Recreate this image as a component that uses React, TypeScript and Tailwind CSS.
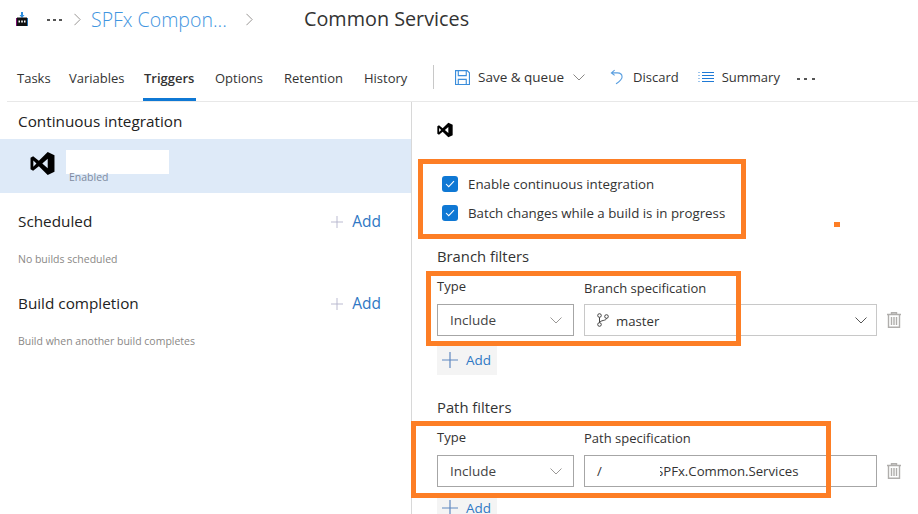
import React from "react";

const VS = ({ className }: { className: string }) => (
  <svg viewBox="0 0 24 24" className={className}>
    <path fillRule="evenodd" d="M17 1 L23.5 4 V20 L17 23 L8.5 14.6 L3 19 L.5 17.5 V6.5 L3 5 L8.5 9.4 Z M17 7.5 L11.8 12 L17 16.5 Z M3.2 9 V15 L6.2 12 Z" fill="#000" />
  </svg>
);
const Chevron = ({ className, color = "#8a8886" }: { className: string; color?: string }) => (
  <svg viewBox="0 0 12 7" className={className} fill="none" stroke={color} strokeWidth="1">
    <path d="M.5 .5 L6 6 L11.5 .5" />
  </svg>
);
const Right = ({ className }: { className: string }) => (
  <svg viewBox="0 0 8 14" className={className} fill="none" stroke="#8a8886" strokeWidth="1">
    <path d="M.5 .5 L7 7 L.5 13.5" />
  </svg>
);
const Dots = ({ className }: { className: string }) => (
  <span className={`flex items-center ${className}`}>
    <span className="w-[3px] h-[2px] bg-[#555]" />
    <span className="w-[3px] h-[2px] bg-[#555]" />
    <span className="w-[3px] h-[2px] bg-[#555]" />
  </span>
);
const Plus = ({ className }: { className: string }) => (
  <svg viewBox="0 0 16 16" className={className} stroke="#b3b3cc" strokeWidth="1.2">
    <path d="M8 0 V16 M0 8 H16" />
  </svg>
);
const Trash = () => (
  <svg viewBox="0 0 14 16" className="w-[14px] h-[16px] shrink-0" fill="none" stroke="#b0aeac" strokeWidth="1.4">
    <path d="M0 2.5 H14 M4.5 2.5 V.7 H9.5 V2.5 M1.5 2.5 V15.3 H12.5 V2.5 M4.5 5 V13 M7 5 V13 M9.5 5 V13" />
  </svg>
);
const Check = () => (
  <span className="w-4 h-4 rounded-[3px] bg-[#0f78d4] flex items-center justify-center shrink-0">
    <svg viewBox="0 0 12 10" className="w-[10px] h-[8px]" fill="none" stroke="#fff" strokeWidth="1.3">
      <path d="M1 5 L4.4 8.4 L11 1.4" />
    </svg>
  </span>
);
const Section = ({ title, note }: { title: string; note: string }) => (
  <div>
    <div className="flex items-center h-[24px] pl-[18px] pr-[30px]">
      <span className="text-[15.3px] text-[#222] mb-[2px]">{title}</span>
      <span className="ml-auto flex items-center gap-[9px] text-[#2f78c4] text-[15.5px]">
        <Plus className="w-3 h-3" />
        Add
      </span>
    </div>
    <div className="pl-[18px] mt-[18px] text-[10.5px] leading-[14px] text-[#8a8886]">{note}</div>
  </div>
);
const Select = () => (
  <div className="w-[137px] h-[32px] border border-[#a6a6a6] flex items-center pl-[12px] pr-[11px] text-[13.5px] text-[#444] shrink-0">
    Include
    <Chevron className="w-3 h-[7px] ml-auto" color="#9a9896" />
  </div>
);
const AddBtn = () => (
  <div className="w-[60px] h-[30px] bg-[#f4f4f4] flex items-center pl-[5px] gap-[8px] text-[13.5px] text-[#2f78c4]">
    <svg viewBox="0 0 16 16" className="w-4 h-4" stroke="#5f88c0" strokeWidth="1.2">
      <path d="M8 0 V16 M0 8 H16" />
    </svg>
    Add
  </div>
);
const Box = ({ className }: { className: string }) => (
  <div className={`absolute border-[5px] border-[#fd7e25] ${className}`} />
);

export default function App() {
  return (
    <div className="relative w-[918px] h-[514px] overflow-hidden bg-white font-['Open_Sans','Noto_Sans',sans-serif]">
      <header className="h-[41px] flex items-center pl-[16px] pt-[1px]">
        <svg viewBox="0 0 12 14" className="w-3 h-[14px] shrink-0 mb-[4px]">
          <path d="M5 0 H7 V3 H8.5 L6 6 L3.5 3 H5 Z" fill="#2f8fe0" />
          <path d="M1 5.5 H11 V14 H1 Z" fill="#111" />
          <path d="M0 6 H1 V14 H0 Z" fill="#7a0d6d" />
          <path d="M11 6 H12 V14 H11 Z" fill="#1f6fb5" />
          <path d="M2.5 8.5 H4 V10.5 H2.5 Z M5.2 8.5 H6.8 V10.5 H5.2 Z M8 8.5 H9.5 V10.5 H8 Z" fill="#fff" />
        </svg>
        <Dots className="gap-[3px] ml-[19px] mb-[3px]" />
        <Right className="w-[7px] h-[13px] ml-[12px] mb-[3px]" />
        <span className="ml-[10px] text-[19.5px] font-light leading-[28px] text-[#3f95e0] whitespace-nowrap w-[137px] mb-[3px]">SPFx Compon...</span>
        <Right className="w-[7px] h-[13px] ml-[18px] mb-[3px]" />
        <span className="ml-[51px] text-[19.8px] leading-[28px] text-[#333] whitespace-nowrap mb-[4px]">Common Services</span>
      </header>

      <nav className="ml-[7px] h-[61px] border-b border-[#e8e8e8] flex items-start text-[13px] text-[#333] relative">
        <div className="flex mt-[27px] leading-[20px]">
          <span className="ml-[10px] w-[52px]">Tasks</span>
          <span className="w-[75px]">Variables</span>
          <span className="w-[71px] font-semibold">Triggers</span>
          <span className="w-[69px]">Options</span>
          <span className="w-[80px]">Retention</span>
          <span className="w-[69px]">History</span>
        </div>
        <span className="absolute left-[136px] top-[57px] w-[53px] h-[3px] bg-[#0f78d4]" />
        <span className="w-px h-[24px] bg-[#c8c8c8] mt-[24px]" />
        <div className="flex items-center mt-[26px] leading-[20px]">
          <svg viewBox="0 0 16 16" className="w-[15px] h-[15px] ml-[21px]" fill="none" stroke="#3a8ddb" strokeWidth="1.2">
            <path d="M.6 .6 H13 L15.4 3 V15.4 H.6 Z M3.5 1 V6 H12 V1 M3.5 15 V10 H12 V15" />
          </svg>
          <span className="ml-[8px] text-[13.5px]">Save &amp; queue</span>
          <Chevron className="w-3 h-[7px] ml-[9px]" />
          <svg viewBox="0 0 14 16" className="w-[13px] h-[16px] ml-[25px]" fill="none" stroke="#5a9fe0" strokeWidth="1.2">
            <path d="M5 .6 L1.5 3.6 L5 6.2 M1.5 3.6 H8 C11 3.6 13 5.5 13 8 C13 11 10 13 6.5 15.4" />
          </svg>
          <span className="ml-[10px]">Discard</span>
          <svg viewBox="0 0 16 12" className="w-[16px] h-[12px] ml-[19px]" stroke="#1f7ad6" strokeWidth="1">
            <path d="M4 1.5 H16 M4 4.5 H16 M4 7.5 H16 M4 10.5 H16" />
            <path d="M0 1.5 H2 M0 4.5 H2 M0 7.5 H2 M0 10.5 H2" stroke="#9cc4ec" />
          </svg>
          <span className="ml-[8px]">Summary</span>
          <Dots className="gap-[4.5px] ml-[17px] mt-[3px]" />
        </div>
      </nav>

      <main className="flex h-[412px]">
        <aside className="w-[411px] shrink-0">
          <div className="pl-[18px] pt-[2px] h-[37px] flex items-center text-[15.3px] text-[#222]">Continuous integration</div>
          <div className="h-[54px] bg-[#deeaf8] flex items-start pl-[30px] relative">
            <VS className="w-[25px] h-[25px] mt-[12px]" />
            <div className="absolute left-[66px] top-[11px] w-[103px] h-[24px] bg-white" />
            <span className="absolute left-[69px] top-[31px] text-[10.5px] leading-[14px] text-[#7f8aa0]">Enabled</span>
          </div>
          <div className="mt-[17px]"><Section title="Scheduled" note="No builds scheduled" /></div>
          <div className="mt-[26px]"><Section title="Build completion" note="Build when another build completes" /></div>
        </aside>
        <section className="flex-1 border-l border-[#d8d8d8] pl-[25px] pr-[17px]">
          <VS className="w-4 h-4 mt-[20px]" />
          <div className="mt-[38px] pl-[5px] flex flex-col gap-[13px] text-[13.3px] text-[#333]">
            <label className="flex items-center gap-[10px] leading-[16px]"><Check />Enable continuous integration</label>
            <label className="flex items-center gap-[10px] leading-[16px]"><Check />Batch changes while a build is in progress</label>
          </div>
          <div className="mt-[25px] text-[14.8px] leading-[20px] text-[#333]">Branch filters</div>
          <div className="mt-[11px] flex text-[13px] leading-[18px] text-[#333]">
            <span className="w-[147px]">Type</span>
            <span className="mt-[2px]">Branch specification</span>
          </div>
          <div className="mt-[7px] flex items-center gap-[10px]">
            <Select />
            <div className="flex-1 h-[32px] border border-[#c8c8c8] flex items-center pl-[12px] pr-[9px] text-[13.2px] text-[#333]">
              <svg viewBox="0 0 12 14" className="w-[12px] h-[14px] mr-[7px]" fill="none" stroke="#444" strokeWidth="1">
                <circle cx="2.5" cy="2.5" r="1.8" />
                <circle cx="2.5" cy="11.5" r="1.8" />
                <circle cx="9.5" cy="3.5" r="1.8" />
                <path d="M2.5 4.3 V9.7 M9.5 5.3 C9.5 8 3 7 2.5 9.7" />
              </svg>
              <span className="mt-[3px]">master</span>
              <Chevron className="w-3 h-[7px] ml-auto" color="#555" />
            </div>
            <Trash />
          </div>
          <div className="mt-[9px]"><AddBtn /></div>
          <div className="mt-[22px] text-[14.8px] leading-[20px] text-[#333]">Path filters</div>
          <div className="mt-[11px] flex text-[13px] leading-[18px] text-[#333]">
            <span className="w-[147px]">Type</span>
            <span className="mt-[1px]">Path specification</span>
          </div>
          <div className="mt-[8px] flex items-center gap-[10px]">
            <Select />
            <div className="flex-1 h-[32px] border border-[#a6a6a6] flex items-center pl-[12px] text-[13.2px] text-[#333] relative">
              <span className="mt-[1px]">/</span>
              <span className="absolute left-[71px] mt-[1px]">SPFx.Common.Services</span>
              <span className="absolute left-[22px] w-[53px] h-[24px] bg-white" />
            </div>
            <Trash />
          </div>
          <div className="mt-[6px]"><AddBtn /></div>
        </section>
      </main>

      <Box className="left-[418px] top-[159px] w-[328px] h-[80px]" />
      <Box className="left-[426px] top-[271px] w-[315px] h-[75px]" />
      <Box className="left-[411px] top-[421px] w-[420px] h-[77px]" />
      <div className="absolute left-[834px] top-[222px] w-[6px] h-[5px] bg-[#fd7e25]" />
    </div>
  );
}
